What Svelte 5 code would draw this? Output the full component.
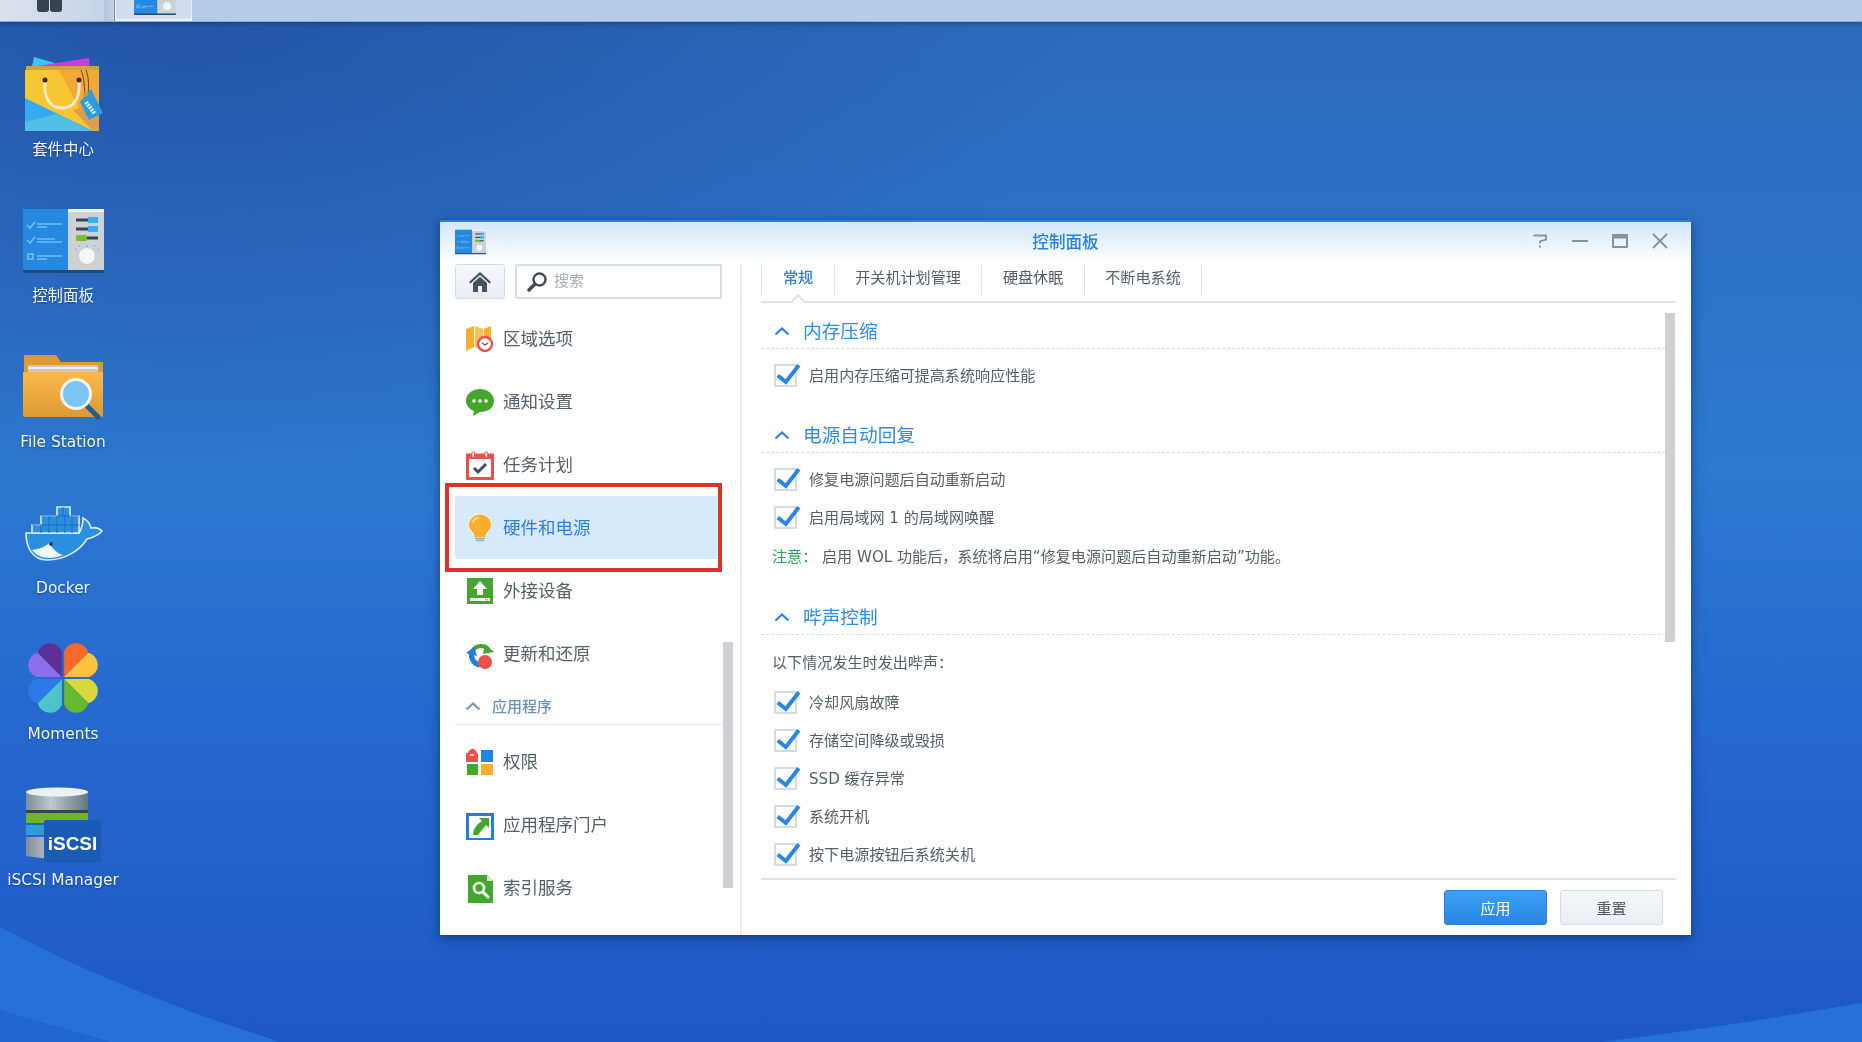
<script>
  const desktopApps = [
    { id: 'store', label: '套件中心' },
    { id: 'control', label: '控制面板' },
    { id: 'files', label: 'File Station' },
    { id: 'docker', label: 'Docker' },
    { id: 'moments', label: 'Moments' },
    { id: 'iscsi', label: 'iSCSI Manager' }
  ]

  const navTop = [
    { id: 'region', label: '区域选项' },
    { id: 'notify', label: '通知设置' },
    { id: 'task', label: '任务计划' },
    { id: 'power', label: '硬件和电源', active: true },
    { id: 'external', label: '外接设备' },
    { id: 'update', label: '更新和还原' }
  ]

  const navApps = [
    { id: 'perm', label: '权限' },
    { id: 'portal', label: '应用程序门户' },
    { id: 'index', label: '索引服务' }
  ]

  const tabs = ['常规', '开关机计划管理', '硬盘休眠', '不断电系统']
  const beepRows = ['冷却风扇故障', '存储空间降级或毁损', 'SSD 缓存异常', '系统开机', '按下电源按钮后系统关机']
  const petals = [
    ['#f7682a', '#fdc23e', 0],
    ['#d8d83f', '#67b92f', 90],
    ['#4fc4c8', '#2a7be8', 180],
    ['#8a70ea', '#5c3196', 270]
  ]
</script>

{#snippet controlIcon(w, h)}
  <svg width={w} height={h} viewBox="0 0 81 64">
    <rect x="0" y="0" width="46" height="62" fill="#2688de" />
    <rect x="45" y="0" width="36" height="62" fill="#ccd2d6" />
    <rect x="45" y="0" width="36" height="3" fill="#f4f5f6" />
    <rect x="0" y="61" width="81" height="3" fill="#1d4d80" />
    <g fill="none" stroke="#6cc0f4" stroke-width="1.6">
      <path d="M4 16l3 3 5-6" />
      <path d="M4 31l3 3 5-6" />
      <rect x="5" y="45" width="5" height="5" />
      <path d="M14 15h25M14 18h10M14 30h18M14 33h25M14 47h25M14 50h10" />
    </g>
    <g>
      <rect x="53" y="9.5" width="22" height="3" fill="#3b4550" />
      <rect x="65" y="8" width="10" height="6" rx="1" fill="#35b0f0" />
      <rect x="53" y="18.5" width="22" height="3" fill="#3b4550" />
      <rect x="65" y="17" width="10" height="6" rx="1" fill="#35b0f0" />
      <rect x="53" y="27.5" width="22" height="3" fill="#3b4550" />
      <rect x="53" y="26" width="11" height="6" rx="1" fill="#76c02f" />
    </g>
    <path d="M52 40l2 1M76 40l-2 1M64 36v2M56 36l1 2M72 36l-1 2" stroke="#9aa2a8" stroke-width="1" />
    <circle cx="64" cy="47" r="8.5" fill="#f4f7f9" stroke="#c4cacf" stroke-width="1" />
  </svg>
{/snippet}

{#snippet deskIcon(id)}
  {#if id === 'store'}
    <svg width="80" height="80" viewBox="0 0 80 80">
      <path d="M8 19 L11 5 L32 11 L30 22Z" fill="#3cc4ee" />
      <path d="M14 14 L66 6 L68 24 L14 24Z" fill="#c63fdc" />
      <rect x="3" y="14" width="73" height="8" fill="#c9a24a" />
      <rect x="2" y="18" width="74" height="61" fill="#f6c733" />
      <path d="M36 18 H76 V79 H72 L56 56Z" fill="#f3a838" />
      <path d="M2 46 L70 79 H2Z" fill="#35aaf2" />
      <path d="M2 79 L2 70 L34 62 L68 79Z" fill="#52bfe6" />
      <path d="M50 58 L76 50 V79 H70Z" fill="#dd9d4c" />
      <path d="M22 28 C20 50 30 56 39 56 C48 56 58 50 56 28" fill="none" stroke="#f7e6c8" stroke-width="3" />
      <circle cx="22" cy="28" r="2.5" fill="#3a2a18" />
      <circle cx="56" cy="28" r="2.5" fill="#3a2a18" />
      <path d="M58 18 C62 28 61 36 62 42 M63 18 C66 26 66 36 65 42" fill="none" stroke="#5a4a28" stroke-width="1" />
      <path d="M57 50 L68 37 L80 61 L66 68Z" fill="#2b9ce0" />
      <circle cx="63" cy="42" r="2.5" fill="#c39a3a" />
      <path d="M63 50 L72 62" stroke="#dff1fb" stroke-width="4" stroke-dasharray="2 1" />
    </svg>
  {:else if id === 'control'}
    <div class="icon-frame">{@render controlIcon(81, 64)}</div>
  {:else if id === 'files'}
    <svg width="80" height="80" viewBox="0 0 80 80">
      <defs>
        <linearGradient id="folderBody" x1="0" y1="0" x2="0" y2="1">
          <stop offset="0" stop-color="#fbb84a" />
          <stop offset="1" stop-color="#dc9a34" />
        </linearGradient>
      </defs>
      <path d="M1 12 Q1 11 3 11 H33 L38 18 H80 V40 H1Z" fill="#dc9a34" />
      <rect x="5" y="21" width="70" height="8" fill="#c9c9c4" />
      <rect x="5" y="23" width="70" height="2" fill="#efeee8" />
      <path d="M0 28 H80 V72 Q80 73 78 73 H2 Q0 73 0 71Z" fill="url(#folderBody)" />
      <path d="M62 60 L75 73" stroke="#225e92" stroke-width="5" stroke-linecap="round" />
      <circle cx="53" cy="50" r="14.5" fill="#7cc6f7" stroke="#f6f3e8" stroke-width="3" />
    </svg>
  {:else if id === 'docker'}
    <svg width="80" height="80" viewBox="0 0 80 80">
      <path d="M3 43 H56 C58 40 60 34 60 28 C64 30 67 34 68 38 C72 37 76 38 79 41 C75 46 68 48 64 49 C56 62 40 70 24 70 C10 70 3 58 3 43Z" fill="#2a8fe0" stroke="#d8eefc" stroke-width="1.6" />
      <path d="M9 60 C16 59 22 57 26 53 C30 59 34 63 40 65 C28 70 16 69 9 60Z" fill="#eef7fd" />
      <path d="M9 43 V35 H18 V26 H34 V17 H47 V26 H56 V43Z" fill="#2a8fe0" stroke="#d8eefc" stroke-width="1.6" />
      <g fill="none" stroke="#1c6db8" stroke-width="1">
        <path d="M9 35 H56 M18 26 H56 M34 26 V43 M18 35 V43 M26 26 V43 M42 26 V43 M49 26 V43 M40 17 V26" />
      </g>
      <circle cx="28" cy="54" r="2" fill="#1f3f5f" />
    </svg>
  {:else if id === 'moments'}
    <svg width="80" height="80" viewBox="0 0 80 80">
      {#each petals as [a, b, rot]}
        <g transform="translate(40 42) rotate({rot}) scale(1.1)">
          <path d="M1 -1 L1 -24 A11.5 11.5 0 0 1 23 -23Z" fill={a} />
          <path d="M1 -1 L23 -23 A11.5 11.5 0 0 1 24 -1Z" fill={b} />
        </g>
      {/each}
    </svg>
  {:else if id === 'iscsi'}
    <svg width="80" height="84" viewBox="0 0 80 84">
      <defs>
        <linearGradient id="cyl" x1="0" y1="0" x2="1" y2="0">
          <stop offset="0" stop-color="#7f8d98" />
          <stop offset=".4" stop-color="#bcc8d0" />
          <stop offset="1" stop-color="#66767f" />
        </linearGradient>
      </defs>
      <path d="M3 55 H65 V74 Q40 80 3 74Z" fill="url(#cyl)" />
      <rect x="3" y="43" width="62" height="10" fill="#2f9bd8" />
      <rect x="3" y="31" width="62" height="10" fill="#6fb42a" />
      <rect x="3" y="28" width="62" height="3" fill="#39434a" />
      <rect x="3" y="10" width="62" height="18" fill="url(#cyl)" />
      <ellipse cx="34" cy="10" rx="31" ry="4.5" fill="#eef1f3" />
      <rect x="21" y="38" width="57" height="42" rx="2" fill="#1a5cb5" />
      <text x="49.5" y="68" text-anchor="middle" class="iscsi-text">iSCSI</text>
    </svg>
  {/if}
{/snippet}

{#snippet navIcon(id)}
  <svg class="nav-icon" width="30" height="30" viewBox="0 0 30 30">
    {#if id === 'region'}
      <path d="M1 5 L9 2 V23 L1 27Z" fill="#fbae2e" />
      <path d="M10 2 L18 5 V26 L10 23Z" fill="#fcc05a" />
      <path d="M19 5 L26 2 V14 L19 16Z" fill="#fbae2e" />
      <circle cx="20" cy="20" r="7" fill="#fff" stroke="#e9504a" stroke-width="2.4" />
      <path d="M17 19l3 2 3-2" fill="none" stroke="#7a4a4a" stroke-width="1.3" />
    {:else if id === 'notify'}
      <path d="M15 2 C23 2 29 7 29 14 C29 21 23 25 15 25 L8 29 L9 24 C4 22 1 18 1 14 C1 7 7 2 15 2Z" fill="#43a72e" />
      <circle cx="9" cy="14" r="1.8" fill="#fff" />
      <circle cx="15" cy="14" r="1.8" fill="#fff" />
      <circle cx="21" cy="14" r="1.8" fill="#fff" />
    {:else if id === 'task'}
      <rect x="2.5" y="5" width="25" height="23.5" fill="#fff" stroke="#ef4f4a" stroke-width="3" />
      <rect x="1" y="4" width="28" height="5" fill="#ef4f4a" />
      <rect x="7" y="2" width="2.5" height="5" fill="#fff" stroke="#ef4f4a" stroke-width=".8" />
      <rect x="20" y="2" width="2.5" height="5" fill="#fff" stroke="#ef4f4a" stroke-width=".8" />
      <path d="M9 18l4 4 8-8" fill="none" stroke="#444c54" stroke-width="3" />
    {:else if id === 'power'}
      <circle cx="15" cy="12" r="11.5" fill="#fff" opacity=".7" />
      <path d="M15 1.5 C21 1.5 26 6 26 12 C26 17 21 19 20 24 H10 C9 19 4 17 4 12 C4 6 9 1.5 15 1.5Z" fill="#fbae2e" />
      <path d="M8 9 C9 6.5 11 5 13 5" fill="none" stroke="#fde0a8" stroke-width="1.6" stroke-linecap="round" />
      <path d="M10 25.5h10M11 27.5h8" stroke="#a8adb2" stroke-width="1.4" />
    {:else if id === 'external'}
      <rect x="2" y="2" width="26" height="26" fill="#43a72e" />
      <path d="M15 5 L22 13 H18 V19 H12 V13 H8Z" fill="#fff" />
      <rect x="5" y="22" width="20" height="3" fill="#fff" />
      <rect x="20" y="23" width="3" height="1.5" fill="#fbae2e" />
    {:else if id === 'update'}
      <path d="M8 11 A10 10 0 0 1 23 10" fill="none" stroke="#43a72e" stroke-width="4" />
      <path d="M20 5 L29 13 L18 15Z" fill="#43a72e" />
      <path d="M7 13 A10 10 0 0 0 15 26" fill="none" stroke="#1f7fdc" stroke-width="5" />
      <path d="M1 14 L9 8 L12 17Z" fill="#1f7fdc" />
      <circle cx="20" cy="23" r="7" fill="#ef4f4a" />
    {:else if id === 'perm'}
      <path d="M3 7 A4.5 5 0 0 1 12 7Z" fill="#ef4f4a" />
      <rect x="1" y="6" width="12" height="9" rx="1" fill="#ef4f4a" />
      <path d="M5 8h4" stroke="#fff" stroke-width="1.2" />
      <rect x="16" y="3" width="12" height="12" fill="#1f85e2" />
      <rect x="2" y="17" width="11" height="11" fill="#43a72e" />
      <rect x="16" y="17" width="12" height="11" fill="#fbae2e" />
    {:else if id === 'portal'}
      <rect x="2.5" y="4.5" width="25" height="25" fill="#fff" stroke="#1f7fdc" stroke-width="3" />
      <path d="M14 8 H24 V18 L21 15 L13 25 H8 C8 19 12 14 17 11Z" fill="#43a72e" />
    {:else if id === 'index'}
      <path d="M3 2 H22 L28 8 V30 H3Z" fill="#43a72e" />
      <path d="M22 2 V8 H28Z" fill="#d5ecd0" />
      <circle cx="14" cy="15" r="5" fill="none" stroke="#fff" stroke-width="2.5" />
      <path d="M18 19 L23 24" stroke="#fff" stroke-width="3" stroke-linecap="round" />
    {/if}
  </svg>
{/snippet}

{#snippet chevron()}
  <svg class="chevron" width="16" height="10" viewBox="0 0 16 10">
    <path d="M1.5 8.5 L8 2.5 L14.5 8.5" fill="none" stroke="currentColor" stroke-width="2.2" />
  </svg>
{/snippet}

{#snippet checkRow(label)}
  <div class="check-row">
    <span class="check-box">
      <svg width="26" height="26" viewBox="0 0 24 24">
        <path d="M2.5 12.5 L10 18.5 L22 3" fill="none" stroke="#2687e8" stroke-width="3.6" />
      </svg>
    </span>
    <span class="check-label">{label}</span>
  </div>
{/snippet}

<div class="desktop">
  <svg class="wallpaper" width="1862" height="1042" viewBox="0 0 1862 1042">
    <path d="M0 927 C90 975 180 1010 280 1042 L110 1042 C70 1030 30 1020 0 1010Z" fill="#2670d8" />
    <path d="M0 1010 C30 1020 70 1030 110 1042 H0Z" fill="#2165d0" />
    <path d="M1600 1042 C1700 1030 1790 1015 1862 1003 V1042Z" fill="#2670d8" />
  </svg>

  <header class="taskbar">
    <div class="menu-btn">
      <span class="menu-dot"></span>
      <span class="menu-dot"></span>
    </div>
    <div class="task-gap"></div>
    <div class="task-tab">
      <div class="task-thumb">{@render controlIcon(42, 33)}</div>
    </div>
  </header>

  <div class="app-column">
    {#each desktopApps as app}
      <div class="app">
        <div class="app-icon">{@render deskIcon(app.id)}</div>
        <div class="app-label">{app.label}</div>
      </div>
    {/each}
  </div>

  <section class="window">
    <div class="titlebar">
      <div class="title-icon">{@render controlIcon(31, 26)}</div>
      <div class="title">控制面板</div>
      <div class="win-buttons">
        <svg width="16" height="16" viewBox="0 0 16 16"><path d="M1.5 2.5 H14 V6.5 L8 8.5 V10.5" fill="none" stroke="#88929c" stroke-width="1.8" /><rect x="7" y="12.5" width="2" height="2" fill="#88929c" /></svg>
        <svg width="16" height="16" viewBox="0 0 16 16"><path d="M0 8 H16" stroke="#88929c" stroke-width="2" /></svg>
        <svg width="16" height="16" viewBox="0 0 16 16"><path d="M1 2 H15 V14 H1Z" fill="none" stroke="#88929c" stroke-width="2" /><rect x="1" y="2" width="14" height="3.5" fill="#88929c" /></svg>
        <svg width="16" height="16" viewBox="0 0 16 16"><path d="M1 1 L15 15 M15 1 L1 15" stroke="#88929c" stroke-width="1.8" /></svg>
      </div>
    </div>

    <div class="win-body">
      <aside class="sidebar">
        <div class="side-tools">
          <button class="home-btn" aria-label="home">
            <svg width="22" height="20" viewBox="0 0 22 20">
              <path d="M11 0 L22 10 L20.5 11.5 L11 3 L1.5 11.5 L0 10Z" fill="#47525c" />
              <path d="M4 11 L11 4.8 L18 11 V20 H13 V14 H9 V20 H4Z" fill="#47525c" />
            </svg>
          </button>
          <div class="search">
            <svg width="20" height="20" viewBox="0 0 20 20">
              <circle cx="12.5" cy="7.5" r="6" fill="none" stroke="#3f4a54" stroke-width="2.4" />
              <path d="M8 12 L2 18" stroke="#3f4a54" stroke-width="3.4" stroke-linecap="round" />
            </svg>
            <span class="search-hint">搜索</span>
          </div>
        </div>

        {#each navTop as item}
          <div class="nav-item" class:active={item.active}>
            {@render navIcon(item.id)}
            <span class="nav-label">{item.label}</span>
            {#if item.active}<div class="highlight"></div>{/if}
          </div>
        {/each}

        <div class="nav-group">
          {@render chevron()}
          <span>应用程序</span>
        </div>

        {#each navApps as item}
          <div class="nav-item">
            {@render navIcon(item.id)}
            <span class="nav-label">{item.label}</span>
          </div>
        {/each}

        <div class="side-scroll"></div>
      </aside>

      <main class="content">
        <nav class="tabs">
          {#each tabs as tab, i}
            <div class="tab" class:current={i === 0}>{tab}</div>
          {/each}
        </nav>

        <div class="panel">
          <div class="panel-scroll"></div>

          <h3 class="heading">{@render chevron()}<span class="heading-text">内存压缩</span></h3>
          {@render checkRow('启用内存压缩可提高系统响应性能')}

          <h3 class="heading spaced">{@render chevron()}<span class="heading-text">电源自动回复</span></h3>
          {@render checkRow('修复电源问题后自动重新启动')}
          {@render checkRow('启用局域网 1 的局域网唤醒')}
          <p class="note"><span class="note-tag">注意：</span>启用 WOL 功能后，系统将启用“修复电源问题后自动重新启动”功能。</p>

          <h3 class="heading spaced">{@render chevron()}<span class="heading-text">哔声控制</span></h3>
          <p class="intro">以下情况发生时发出哔声：</p>
          {#each beepRows as row}
            {@render checkRow(row)}
          {/each}
        </div>

        <footer class="actions">
          <button class="btn primary">应用</button>
          <button class="btn">重置</button>
        </footer>
      </main>
    </div>
  </section>
</div>

<style>
  :global(body) {
    margin: 0;
    font-family: "DejaVu Sans", "Noto Sans CJK SC", sans-serif;
  }

  .desktop {
    position: relative;
    width: 1862px;
    height: 1042px;
    overflow: hidden;
    filter: blur(0.5px);
    background:
      radial-gradient(900px 500px at 10% 0%, rgba(28, 66, 150, 0.55), rgba(28, 66, 150, 0) 100%),
      linear-gradient(180deg, #2c6bbb 0%, #2d78d0 45%, #2568ce 70%, #1e58c4 100%);
  }

  .wallpaper {
    position: absolute;
    left: 0;
    top: 0;
  }

  .taskbar {
    position: relative;
    display: flex;
    height: 22px;
    background: #b6cbe8;
    border-bottom: 1px solid #8fb0d8;
    box-shadow: 0 2px 4px rgba(10, 40, 90, 0.45);
    box-sizing: border-box;
  }

  .menu-btn {
    width: 104px;
    display: flex;
    gap: 1px;
    padding-left: 37px;
    box-sizing: border-box;
    background: linear-gradient(90deg, #dbe2ec, #c6d3e8);
  }

  .menu-dot {
    width: 12px;
    height: 12px;
    border-radius: 0 0 3px 3px;
    background: #39434d;
  }

  .task-gap {
    width: 11px;
    background: linear-gradient(90deg, #b3c3df, #c4d1e8);
    border-right: 1px solid #7d8ea8;
    box-sizing: border-box;
  }

  .task-tab {
    width: 77px;
    box-sizing: border-box;
    background: #d3ddf0;
    border-left: 1px solid #eef3fa;
    border-right: 1px solid #eef3fa;
    border-bottom: 2px solid #eef3fa;
    overflow: hidden;
  }

  .task-thumb {
    margin-left: 18px;
    margin-top: -18px;
  }

  .app-column {
    position: relative;
    display: flex;
    flex-direction: column;
    width: 126px;
    padding-top: 30px;
  }

  .app {
    height: 146px;
    display: flex;
    flex-direction: column;
    align-items: center;
    flex: none;
  }

  .app-icon {
    height: 80px;
    width: 81px;
    display: flex;
    justify-content: center;
  }

  .icon-frame {
    padding-top: 11px;
  }

  .iscsi-text {
    font-family: "Liberation Sans", sans-serif;
    font-weight: 700;
    font-size: 19px;
    fill: #fff;
  }

  .app-label {
    margin-top: 8px;
    height: 20px;
    line-height: 20px;
    font-size: 15.4px;
    color: #f2f6fc;
    white-space: nowrap;
    text-shadow: 0 1px 2px rgba(10, 40, 100, 0.6);
  }

  .window {
    position: absolute;
    left: 440px;
    top: 220px;
    width: 1251px;
    height: 715px;
    display: flex;
    flex-direction: column;
    background: #fff;
    border-top: 2px solid #2a7fdf;
    box-sizing: border-box;
    box-shadow: 0 3px 10px rgba(5, 30, 80, 0.55);
  }

  .titlebar {
    position: relative;
    flex: none;
    height: 41px;
    display: flex;
    align-items: center;
    justify-content: center;
    background: linear-gradient(180deg, #d2e7f8 0%, #ffffff 100%);
  }

  .title-icon {
    position: absolute;
    left: 15px;
    top: 7px;
    line-height: 0;
  }

  .title {
    font-size: 16.6px;
    font-weight: 500;
    color: #2a80e0;
    padding-bottom: 3px;
  }

  .win-buttons {
    position: absolute;
    right: 23px;
    top: 11px;
    display: flex;
    gap: 24px;
  }

  .win-body {
    flex: 1;
    display: flex;
    min-height: 0;
  }

  .sidebar {
    position: relative;
    width: 300px;
    padding: 1px 18px 0 15px;
    box-sizing: border-box;
    flex: none;
  }

  .side-tools {
    display: flex;
    gap: 10px;
    margin-bottom: 8px;
  }

  .home-btn {
    width: 50px;
    height: 35px;
    padding: 0;
    display: flex;
    align-items: center;
    justify-content: center;
    background: linear-gradient(180deg, #f5f8fb, #e9eef4);
    border: 1px solid #d3dce6;
    border-radius: 3px;
  }

  .search {
    flex: 1;
    height: 35px;
    box-sizing: border-box;
    display: flex;
    align-items: center;
    gap: 7px;
    padding-left: 10px;
    border: 2px solid #d6dee8;
    border-radius: 2px;
    font-size: 15px;
    color: #a5adb5;
  }

  .search-hint {
    padding-bottom: 4px;
  }

  .nav-item {
    position: relative;
    height: 63px;
    display: flex;
    align-items: center;
    gap: 8px;
    padding-left: 10px;
    font-size: 17.5px;
    color: #55606a;
    white-space: nowrap;
  }

  .nav-label {
    padding-bottom: 2px;
  }

  .nav-item.active {
    background: #d6eafb;
    color: #2f7de0;
    border-radius: 3px 0 0 3px;
  }

  .nav-icon {
    flex: none;
  }

  .highlight {
    position: absolute;
    left: -10px;
    right: 0;
    top: -13px;
    bottom: -13px;
    border: 4px solid #e0302a;
    box-sizing: border-box;
  }

  .nav-group {
    height: 40px;
    padding-top: 2px;
    box-sizing: border-box;
    display: flex;
    align-items: center;
    gap: 11px;
    padding-left: 10px;
    margin-bottom: 5px;
    border-bottom: 1px solid #e4ebf3;
    font-size: 15px;
    font-weight: 500;
    color: #6f92b4;
  }

  .nav-group .chevron {
    color: #7a97b4;
  }

  .side-scroll {
    position: absolute;
    left: 283px;
    top: 379px;
    width: 10px;
    height: 246px;
    background: #cfd0d4;
  }

  .content {
    flex: 1;
    display: flex;
    flex-direction: column;
    min-width: 0;
    border-left: 2px solid #ececec;
    padding: 1px 15px 0 19px;
    margin-top: 1px;
  }

  .tabs {
    position: relative;
    flex: none;
    display: flex;
    height: 38px;
    padding-bottom: 7px;
    box-sizing: border-box;
    border-bottom: 2px solid #e2e2e2;
  }

  .tab {
    height: 30px;
    line-height: 27px;
    padding: 0 20.5px;
    font-size: 15.1px;
    color: #55606a;
    border-right: 1px solid #dbe3ec;
    box-sizing: border-box;
  }

  .tab:first-child {
    border-left: 1px solid #dbe3ec;
    padding-left: 21px;
  }

  .tab.current {
    color: #2a80e0;
    font-weight: 500;
    position: relative;
  }

  .tab.current::after {
    content: '';
    position: absolute;
    left: 31px;
    top: 31px;
    width: 10px;
    height: 10px;
    background: #fff;
    border-left: 2px solid #e2e2e2;
    border-top: 2px solid #e2e2e2;
    box-sizing: border-box;
    transform: rotate(45deg);
  }

  .panel {
    position: relative;
    flex: 1;
    padding-top: 11px;
    min-height: 0;
  }

  .panel-scroll {
    position: absolute;
    right: 1px;
    top: 10px;
    width: 10px;
    height: 329px;
    background: #cfd0d4;
  }

  .heading {
    height: 35px;
    margin: 0 0 7px;
    padding-left: 13px;
    box-sizing: border-box;
    display: flex;
    align-items: center;
    gap: 13px;
    border-bottom: 1px dashed #d5dde8;
    font-size: 18.7px;
    font-weight: 400;
    color: #2e8be8;
  }

  .heading-text {
    padding-bottom: 4px;
  }

  .heading.spaced {
    margin-top: 24px;
  }

  .chevron {
    flex: none;
    color: #2a85e4;
  }

  .check-row {
    height: 38px;
    display: flex;
    align-items: center;
    gap: 12px;
    padding-left: 13px;
    font-size: 15.1px;
    color: #55606a;
    white-space: nowrap;
  }

  .check-label {
    padding-bottom: 3px;
  }

  .check-box {
    position: relative;
    flex: none;
    width: 23px;
    height: 23px;
    box-sizing: border-box;
    border: 2px solid #d3dce6;
    border-radius: 1px;
    background: #fff;
  }

  .check-box svg {
    position: absolute;
    left: -1px;
    top: -4px;
  }

  .note {
    height: 40px;
    margin: 0;
    padding: 0 0 3px 11px;
    box-sizing: border-box;
    display: flex;
    align-items: center;
    font-size: 15.1px;
    color: #55606a;
    white-space: nowrap;
  }

  .note-tag {
    width: 50px;
    color: #2fa35a;
  }

  .intro {
    height: 41px;
    margin: 0;
    padding: 0 0 3px 11px;
    box-sizing: border-box;
    display: flex;
    align-items: center;
    font-size: 15.1px;
    color: #55606a;
  }

  .actions {
    flex: none;
    height: 57px;
    display: flex;
    justify-content: flex-end;
    gap: 13px;
    padding: 10px 13px 0 0;
    box-sizing: border-box;
    border-top: 2px solid #e2e2e2;
  }

  .btn {
    width: 103px;
    height: 35px;
    font: inherit;
    font-size: 15px;
    color: #4a545e;
    background: linear-gradient(180deg, #f5f8fb, #e9eef4);
    border: 1px solid #d3dce6;
    border-radius: 3px;
  }

  .btn.primary {
    color: #fff;
    background: linear-gradient(180deg, #3da0f5, #2a86e2);
    border-color: #2a7fd8;
  }
</style>
